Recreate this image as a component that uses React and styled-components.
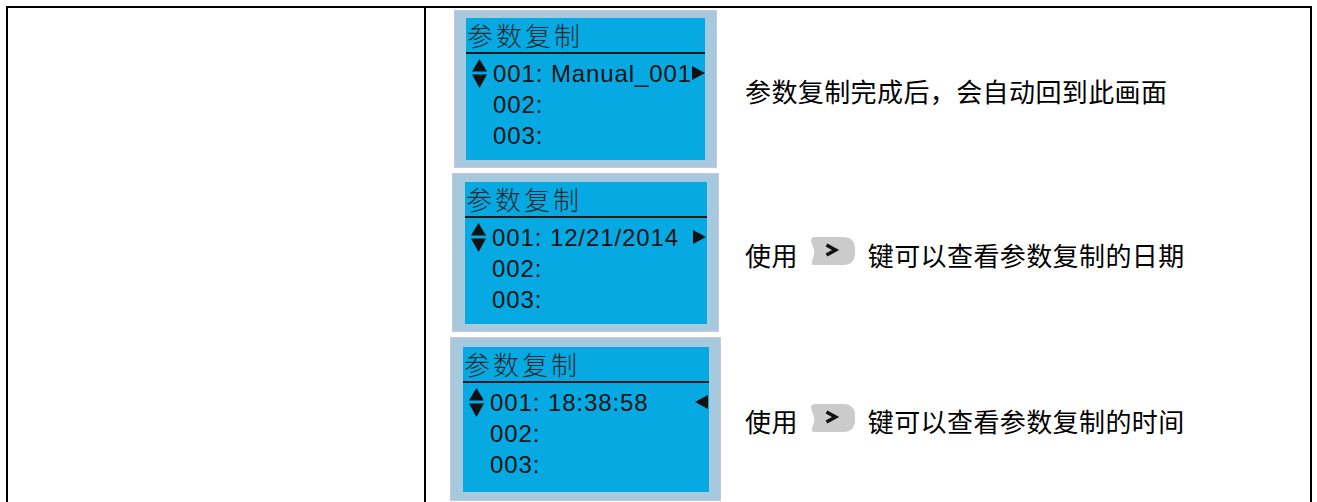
import styled, { createGlobalStyle } from "styled-components";

const GlobalStyle = createGlobalStyle`
  html, body {
    margin: 0;
    padding: 0;
    background: #fff;
    overflow: hidden;
  }
`;

const screens = [
  {
    pad: "7px 11px 7px 11px",
    w: 239,
    h: 142,
    value: "001: Manual_001",
    pointer: "right",
    note: "参数复制完成后，会自动回到此画面",
  },
  {
    pad: "8px 11px 7px 12px",
    w: 242,
    h: 142,
    value: "001: 12/21/2014",
    pointer: "right",
    key: true,
    before: "使用",
    note: "键可以查看参数复制的日期",
  },
  {
    pad: "9px 11px 8px 12px",
    w: 246,
    h: 145,
    value: "001: 18:38:58",
    pointer: "left",
    key: true,
    before: "使用",
    note: "键可以查看参数复制的时间",
  },
];

const UpDown = () => (
  <IconBox>
    <svg width="17" height="31" viewBox="0 0 17 31">
      <polygon points="8.5,1 16,13.5 1,13.5" fill="#111" />
      <polygon points="1,16.5 16,16.5 8.5,30" fill="#111" />
    </svg>
  </IconBox>
);

const Pointer = ({ dir }) => (
  <svg width="13" height="14" viewBox="0 0 13 14">
    {dir === "right" ? (
      <polygon points="0,0 13,7 0,14" fill="#111" />
    ) : (
      <polygon points="13,0 0,7 13,14" fill="#111" />
    )}
  </svg>
);

const KeyButton = () => (
  <KeyWrap>
    <svg width="46" height="30" viewBox="0 0 46 30">
      <path
        d="M5,1 L33,1 Q45,1 45,13 L45,17 Q45,29 33,29 L4,29 Q1,29 2,25 L4,19 Q5,15 3,11 L1,5 Q1,1 5,1 Z"
        fill="#cbcbcb"
      />
      <path
        d="M16.5,9 L25.5,14 L16.5,19"
        fill="none"
        stroke="#111"
        strokeWidth="3.6"
        strokeLinejoin="miter"
      />
    </svg>
  </KeyWrap>
);

const App = () => {
  return (
    <Page>
      <GlobalStyle />
      <Table>
        <LeftCell />
        <RightCell>
          {screens.map((s, i) => (
            <Row key={i}>
              <ScreenCol>
                <Frame $pad={s.pad}>
                  <Lcd $w={s.w} $h={s.h}>
                    <Title>参数复制</Title>
                    <Lines>
                      <Line>
                        <UpDown />
                        <span>{s.value}</span>
                        <PointerSlot>
                          <Pointer dir={s.pointer} />
                        </PointerSlot>
                      </Line>
                      <Line $indent>002:</Line>
                      <Line $indent>003:</Line>
                    </Lines>
                  </Lcd>
                </Frame>
              </ScreenCol>
              <Note>
                {s.key ? (
                  <>
                    <span>{s.before}</span>
                    <KeyButton />
                    <span>{s.note}</span>
                  </>
                ) : (
                  <span>{s.note}</span>
                )}
              </Note>
            </Row>
          ))}
        </RightCell>
      </Table>
    </Page>
  );
};

const Page = styled.div`
  padding: 6px 5px 0 6px;
`;

const Table = styled.div`
  display: grid;
  grid-template-columns: 418px 1fr;
  border: 2px solid #000;
  border-bottom: none;
  min-height: 520px;
`;

const LeftCell = styled.div`
  border-right: 2px solid #000;
`;

const RightCell = styled.div`
  display: flex;
  flex-direction: column;
  gap: 5px;
  padding-top: 2px;
`;

const Row = styled.div`
  display: grid;
  grid-template-columns: 319px 1fr;
  align-items: center;
`;

const ScreenCol = styled.div`
  display: flex;
  justify-content: center;
`;

const Frame = styled.div`
  background: #a7c9dd;
  border: 1px solid #c9c4e4;
  padding: ${(p) => p.$pad};
`;

const Lcd = styled.div`
  width: ${(p) => p.$w}px;
  height: ${(p) => p.$h}px;
  background: #06a9e1;
  display: flex;
  flex-direction: column;
`;

const Title = styled.div`
  height: 34px;
  line-height: 34px;
  padding-left: 1px;
  border-bottom: 2px solid #1a1a1a;
  font-family: "Noto Sans CJK SC", sans-serif;
  font-weight: 300;
  font-size: 26px;
  letter-spacing: 3px;
  color: #1e2a30;
`;

const Lines = styled.div`
  padding-top: 4px;
  display: flex;
  flex-direction: column;
`;

const Line = styled.div`
  display: flex;
  align-items: center;
  height: 31px;
  padding-left: ${(p) => (p.$indent ? "27px" : "5px")};
  font-family: "Liberation Sans", Arial, sans-serif;
  font-size: 24px;
  letter-spacing: 0.9px;
  color: #141414;
  white-space: nowrap;
`;

const IconBox = styled.span`
  display: flex;
  flex-shrink: 0;
  margin-right: 5px;
`;

const PointerSlot = styled.span`
  margin-left: auto;
  padding-right: 1px;
  display: flex;
  flex-shrink: 0;
  margin-top: -2px;
`;

const Note = styled.div`
  display: flex;
  align-items: center;
  padding-top: 3px;
  font-family: "Noto Sans CJK SC", sans-serif;
  font-size: 26px;
  letter-spacing: 0.4px;
  color: #000;
  white-space: nowrap;
`;

const KeyWrap = styled.span`
  display: inline-flex;
  margin: -6px 12px 0 12px;
`;

export default App;
